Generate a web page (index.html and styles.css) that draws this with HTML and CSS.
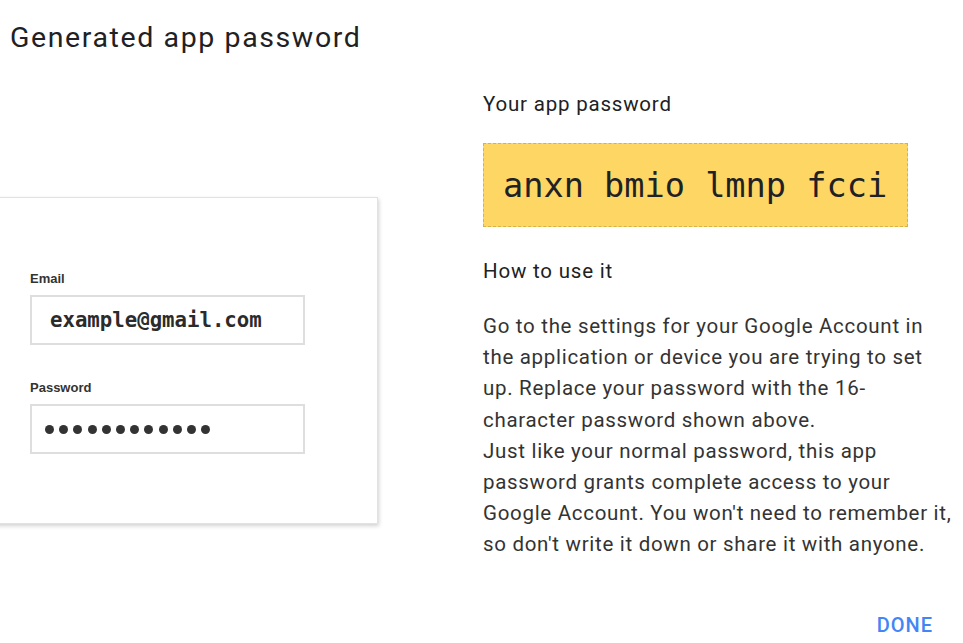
FILE: index.html
```html
<!DOCTYPE html>
<html>
<head>
<meta charset="utf-8">
<link rel="stylesheet" href="styles.css">
</head>
<body>
<div class="page">
  <h1 class="title">Generated app password</h1>
  <div class="content">
    <div class="left">
      <div class="card">
        <div class="field">
          <div class="label">Email</div>
          <div class="input email">example@gmail.com</div>
        </div>
        <div class="field">
          <div class="label">Password</div>
          <div class="input pass">
            <span class="dot"></span><span class="dot"></span><span class="dot"></span><span class="dot"></span><span class="dot"></span><span class="dot"></span><span class="dot"></span><span class="dot"></span><span class="dot"></span><span class="dot"></span><span class="dot"></span><span class="dot"></span>
          </div>
        </div>
      </div>
    </div>
    <div class="right">
      <h2 class="sub">Your app password</h2>
      <div class="code">anxn bmio lmnp fcci</div>
      <h2 class="sub how">How to use it</h2>
      <p class="text">Go to the settings for your Google Account in the application or device you are trying to set up. Replace your password with the 16-character password shown above.<br>Just like your normal password, this app password grants complete access to your Google Account. You won't need to remember it, so don't write it down or share it with anyone.</p>
      <div class="actions"><span class="done">DONE</span></div>
    </div>
  </div>
</div>
</body>
</html>
```

FILE: styles.css
```css
html, body {
  margin: 0;
  padding: 0;
  background: #fff;
}
body {
  font-family: Roboto, "Noto Sans", sans-serif;
  color: #202124;
  overflow: hidden;
}
.page {
  width: 963px;
  height: 643px;
}
.title {
  margin: 0;
  padding: 19px 0 0 10px;
  font-size: 28.5px;
  font-weight: 400;
  letter-spacing: 1.6px;
  line-height: 38px;
}
.content {
  display: flex;
}
.left {
  width: 483px;
  padding-top: 140px;
}
.card {
  margin-left: -22px;
  width: 400px;
  height: 327px;
  box-sizing: border-box;
  border: 1px solid #e2e2e2;
  box-shadow: 1px 2px 4px rgba(0,0,0,0.18);
  padding: 73px 0 0 51px;
  background: #fff;
}
.field {
  margin-bottom: 35px;
}
.label {
  font-family: "Liberation Sans", Arial, sans-serif;
  font-size: 13px;
  font-weight: 600;
  color: #333;
  line-height: 16px;
  margin-bottom: 8px;
}
.input {
  width: 275px;
  height: 50px;
  box-sizing: border-box;
  border: 2px solid #dedede;
  display: flex;
  align-items: center;
}
.email {
  font-family: "DejaVu Sans Mono", monospace;
  font-weight: bold;
  font-size: 20.7px;
  color: #2b2b2b;
  padding-left: 18px;
}
.pass {
  padding-left: 13px;
  gap: 5.2px;
}
.dot {
  width: 9px;
  height: 9px;
  border-radius: 50%;
  background: #333;
  flex: none;
}
.right {
  flex: 1;
  padding-top: 33px;
}
.sub {
  margin: 0;
  font-size: 20.5px;
  font-weight: 400;
  letter-spacing: 0.8px;
  line-height: 28px;
  color: #202124;
}
.code {
  margin-top: 25px;
  width: 425px;
  height: 84px;
  box-sizing: border-box;
  background: #fdd663;
  border: 1px dashed #d6b24e;
  font-family: "DejaVu Sans Mono", monospace;
  font-size: 33.6px;
  color: #202124;
  display: flex;
  align-items: center;
  padding-left: 19px;
  white-space: nowrap;
}
.how {
  margin-top: 30px;
}
.text {
  margin: 26px 0 0;
  width: 470px;
  font-size: 20.5px;
  letter-spacing: 0.7px;
  line-height: 31.2px;
  color: #333;
}
.actions {
  display: flex;
  justify-content: flex-end;
  width: 450px;
  margin-top: 52px;
}
.done {
  color: #4285f4;
  font-weight: 500;
  font-size: 20px;
  letter-spacing: 1px;
}
```
